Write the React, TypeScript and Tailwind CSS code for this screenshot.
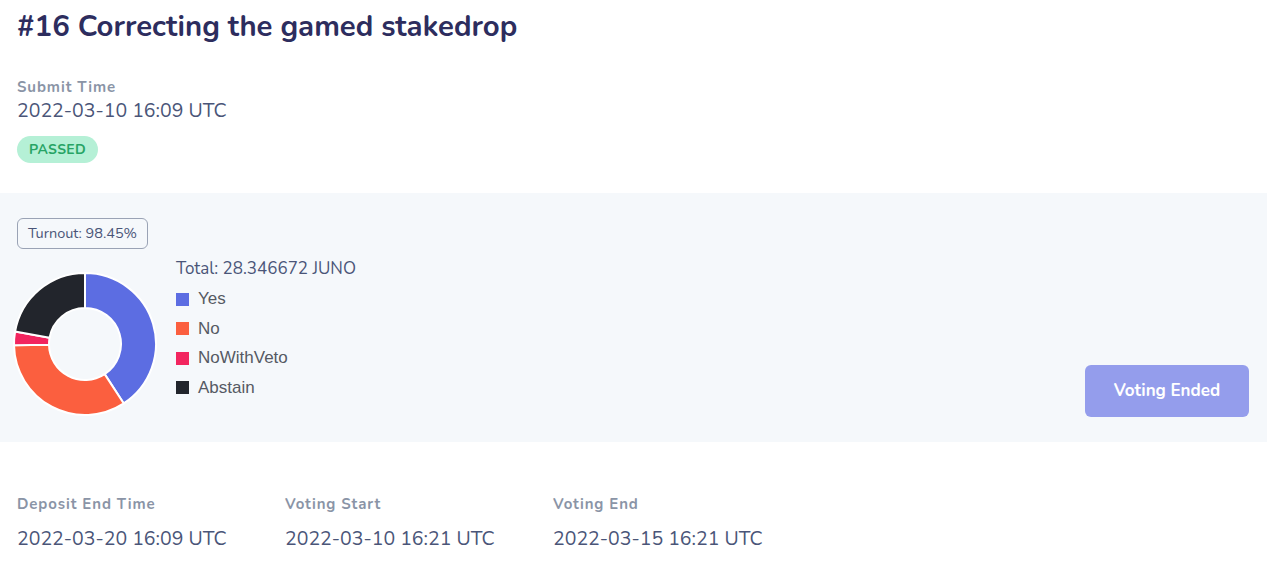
import React from "react";

const votes = [
  { label: "Yes", value: 40.8, color: "#5c6de2" },
  { label: "No", value: 33.9, color: "#fb5f3f" },
  { label: "NoWithVeto", value: 3.1, color: "#f2255f" },
  { label: "Abstain", value: 22.2, color: "#22252c" },
];

function arcPath(cx: number, cy: number, r: number, ri: number, a0: number, a1: number) {
  const p = (rad: number, a: number) => {
    const t = ((a - 90) * Math.PI) / 180;
    return `${(cx + rad * Math.cos(t)).toFixed(2)} ${(cy + rad * Math.sin(t)).toFixed(2)}`;
  };
  const large = a1 - a0 > 180 ? 1 : 0;
  return `M ${p(r, a0)} A ${r} ${r} 0 ${large} 1 ${p(r, a1)} L ${p(ri, a1)} A ${ri} ${ri} 0 ${large} 0 ${p(ri, a0)} Z`;
}

function Donut() {
  const total = votes.reduce((s, v) => s + v.value, 0);
  let start = 0;
  return (
    <svg width="146" height="146" viewBox="0 0 146 146">
      {votes.map((v) => {
        const end = start + (v.value / total) * 360;
        const d = arcPath(73, 73, 71, 36, start, end);
        start = end;
        return <path key={v.label} d={d} fill={v.color} stroke="#ffffff" strokeWidth="2" strokeLinejoin="round" />;
      })}
    </svg>
  );
}

function Field({ label, value }: { label: string; value: string }) {
  return (
    <div className="w-[268px]">
      <div className="text-[15px] font-bold leading-5 tracking-[0.9px] text-[#8a94a6]">{label}</div>
      <div className="mt-[13px] text-[19.5px] leading-6 text-[#4a5578]">{value}</div>
    </div>
  );
}

export default function App() {
  return (
    <div className="min-h-[561px] w-full bg-white font-['Nunito','Inter',sans-serif]">
      <div className="px-[17px] pt-[8px]">
        <h1 className="text-[29.3px] font-bold leading-9 text-[#2d2d5e]">#16 Correcting the gamed stakedrop</h1>
        <div className="mt-[33px] text-[15px] font-bold leading-5 tracking-[0.9px] text-[#8a94a6]">Submit Time</div>
        <div className="mt-[2px] text-[19.5px] leading-6 text-[#4a5578]">2022-03-10 16:09 UTC</div>
        <div className="mt-[13px] inline-flex h-[27px] items-center rounded-full bg-[#b5f0d6] px-[12px] text-[14px] font-bold tracking-[0.3px] text-[#27a465]">
          PASSED
        </div>
      </div>

      <div className="mt-[30px] flex h-[249px] items-end justify-between bg-[#f5f8fb] pb-[25px] pl-[12px] pr-[18px] pt-[25px]">
        <div className="flex h-full flex-col">
          <div className="ml-[5px] inline-flex h-[33px] w-[131px] items-center justify-center rounded-[6px] border border-[#9aa3b5] text-[14.5px] text-[#4a5578]">
            Turnout: 98.45%
          </div>
          <div className="mt-[22px] flex items-start gap-[18px]">
            <Donut />
            <div className="-mt-[14px] flex flex-col">
              <div className="text-[17px] leading-6 text-[#4a5578]">Total: 28.346672 JUNO</div>
              <div className="mt-[8px] flex flex-col gap-[9.5px] font-['Liberation_Sans',Arial,sans-serif] text-[17px] leading-5 text-[#555a63]">
                {votes.map((v) => (
                  <div key={v.label} className="flex items-center gap-[9px]">
                    <span className="h-[13px] w-[13px]" style={{ backgroundColor: v.color }} />
                    {v.label}
                  </div>
                ))}
              </div>
            </div>
          </div>
        </div>
        <button className="h-[52px] w-[164px] rounded-[6px] bg-[#949dec] text-[17px] font-bold text-white">Voting Ended</button>
      </div>

      <div className="flex px-[17px] pt-[52px]">
        <Field label="Deposit End Time" value="2022-03-20 16:09 UTC" />
        <Field label="Voting Start" value="2022-03-10 16:21 UTC" />
        <Field label="Voting End" value="2022-03-15 16:21 UTC" />
      </div>
    </div>
  );
}
